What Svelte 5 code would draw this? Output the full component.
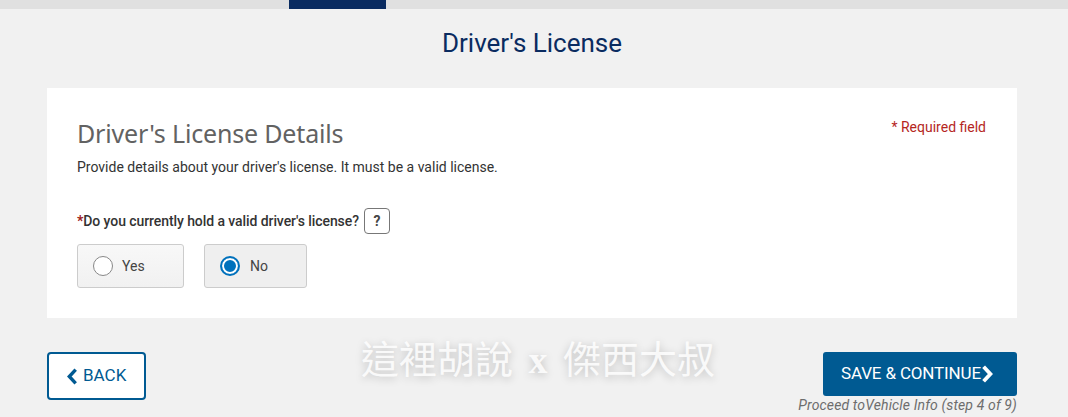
<script>
  let answer = $state("no");
</script>

<div class="progress">
  <div class="progress-fill"></div>
</div>

<main class="page">
  <h1>Driver's License</h1>

  <section class="card">
    <div class="card-head">
      <h2>Driver's License Details</h2>
      <span class="required">* Required field</span>
    </div>
    <p class="intro">Provide details about your driver's license. It must be a valid license.</p>

    <div class="question">
      <span class="label"><span class="star">*</span>Do you currently hold a valid driver's license?</span>
      <button class="help" type="button">?</button>
    </div>

    <div class="options">
      <label class="option yes">
        <input type="radio" name="license" value="yes" bind:group={answer} />
        <span class="dot"></span>
        <span>Yes</span>
      </label>
      <label class="option no">
        <input type="radio" name="license" value="no" bind:group={answer} />
        <span class="dot"></span>
        <span>No</span>
      </label>
    </div>
  </section>

  <div class="actions">
    <button class="back" type="button">
      <svg class="chev" viewBox="0 0 10 16" width="11" height="17"><path d="M8 1.5 2 8l6 6.5" fill="none" stroke="currentColor" stroke-width="3.2"/></svg>
      <span class="btn-text">BACK</span>
    </button>
    <div class="next">
      <button class="save" type="button">
        <span class="btn-text">SAVE &amp; CONTINUE</span><svg class="chev" viewBox="0 0 10 16" width="12" height="18"><path d="M2 1.5 8 8l-6 6.5" fill="none" stroke="currentColor" stroke-width="3.4"/></svg>
      </button>
      <span class="hint">Proceed toVehicle Info (step 4 of 9)</span>
    </div>
  </div>
</main>

<div class="watermark">這裡胡說 <b>x</b> 傑西大叔</div>

<style>
  :global(body) {
    margin: 0;
    background: #f1f1f1;
    font-family: Roboto, "Liberation Sans", sans-serif;
    overflow: hidden;
  }

  .progress {
    height: 9px;
    background: #e0e0e0;
  }

  .progress-fill {
    width: 97px;
    height: 9px;
    margin-left: 289px;
    background: #0a2b60;
  }

  .page {
    padding: 0 51px 0 47px;
  }

  h1 {
    margin: 0;
    padding-top: 17px;
    height: 79px;
    box-sizing: border-box;
    text-align: center;
    font-size: 26px;
    line-height: 34px;
    font-weight: 400;
    color: #0a2b60;
  }

  .card {
    background: #fff;
    height: 230px;
    box-sizing: border-box;
    padding: 30px 31px 0 30px;
  }

  .card-head {
    display: flex;
    justify-content: space-between;
    align-items: flex-start;
  }

  h2 {
    margin: -2px 0 0;
    font-family: "Noto Sans", sans-serif;
    font-size: 25px;
    line-height: 34px;
    font-weight: 400;
    letter-spacing: -0.17px;
    color: #626262;
  }

  .required {
    font-size: 14px;
    line-height: 18px;
    color: #b5261e;
  }

  .intro {
    margin: 8px 0 0;
    font-size: 14px;
    line-height: 18px;
    color: #333;
  }

  .question {
    display: flex;
    align-items: center;
    gap: 5px;
    margin-top: 32px;
    height: 26px;
  }

  .label {
    font-size: 14px;
    font-weight: 500;
    letter-spacing: -0.08px;
    color: #333;
  }

  .star {
    color: #9c1c1c;
    font-weight: 700;
  }

  .help {
    width: 26px;
    height: 26px;
    padding: 0;
    background: #fff;
    border: 1px solid #777;
    border-radius: 4px;
    font-family: inherit;
    font-size: 14px;
    font-weight: 700;
    color: #444;
  }

  .options {
    display: flex;
    gap: 20px;
    margin-top: 10px;
  }

  .option {
    display: flex;
    align-items: center;
    gap: 9px;
    height: 44px;
    box-sizing: border-box;
    padding-left: 15px;
    background: linear-gradient(#f8f8f8, #f1f1f1);
    border: 1px solid #ccc;
    border-radius: 3px;
    font-size: 14px;
    color: #444;
  }

  .option.yes { width: 107px; }

  .option.no {
    width: 103px;
    gap: 10px;
    background: #efefef;
  }

  .option input {
    position: absolute;
    opacity: 0;
    width: 0;
    height: 0;
  }

  .dot {
    width: 20px;
    height: 20px;
    box-sizing: border-box;
    background: #fff;
    border: 1px solid #888;
    border-radius: 50%;
  }

  .option input:checked + .dot {
    border: 2px solid #0071bc;
    box-shadow: inset 0 0 0 2px #fff, inset 0 0 0 10px #0071bc;
  }

  .actions {
    display: flex;
    justify-content: space-between;
    align-items: flex-start;
    margin-top: 34px;
  }

  .back {
    display: flex;
    align-items: center;
    gap: 5px;
    width: 99px;
    height: 48px;
    padding: 0 0 0 18px;
    background: #fff;
    border: 2px solid #005a92;
    border-radius: 4px;
    font-family: inherit;
    font-size: 17px;
    color: #005a92;
  }

  .btn-text {
    position: relative;
    top: -1px;
  }

  .next {
    display: flex;
    flex-direction: column;
    align-items: flex-end;
  }

  .save {
    display: flex;
    align-items: center;
    width: 194px;
    height: 44px;
    padding: 0 0 0 18px;
    background: #005a92;
    border: 0;
    border-radius: 3px;
    font-family: inherit;
    font-size: 17px;
    font-weight: 400;
    letter-spacing: -0.15px;
    color: #fff;
  }

  .hint {
    font-size: 14px;
    line-height: 18px;
    font-style: italic;
    letter-spacing: 0.14px;
    color: #6d6d6d;
  }

  .watermark {
    position: absolute;
    left: 361px;
    top: 336px;
    font-family: "Liberation Serif", "Noto Sans CJK TC", serif;
    font-size: 38px;
    line-height: 48px;
    word-spacing: 6px;
    white-space: nowrap;
    color: rgba(255, 255, 255, 0.85);
    text-shadow: 0 2px 8px rgba(0, 0, 0, 0.22);
  }
</style>
